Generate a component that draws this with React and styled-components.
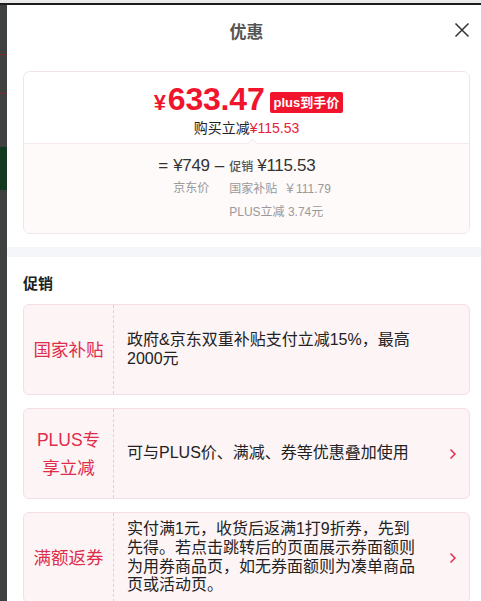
import React from 'react';
import styled, { createGlobalStyle } from 'styled-components';

const GlobalStyle = createGlobalStyle`
  html, body {
    margin: 0;
    padding: 0;
    background: #3f4040;
  }
  body {
    font-family: "Liberation Sans", "Noto Sans CJK SC", sans-serif;
    color: #222;
  }
  * {
    box-sizing: border-box;
  }
`;

const promos = [
  {
    tag: '国家补贴',
    text: '政府&京东双重补贴支付立减15%，最高2000元',
    arrow: false,
  },
  {
    tag: ['PLUS专', '享立减'],
    text: '可与PLUS价、满减、券等优惠叠加使用',
    arrow: true,
  },
  {
    tag: '满额返券',
    text: '实付满1元，收货后返满1打9折券，先到先得。若点击跳转后的页面展示券面额则为用券商品页，如无券面额则为凑单商品页或活动页。',
    arrow: true,
  },
];

const CloseIcon = () => (
  <svg width="16" height="16" viewBox="0 0 16 16">
    <path d="M1.5 1.5 L14.5 14.5 M14.5 1.5 L1.5 14.5" stroke="#333" strokeWidth="1.5" fill="none" />
  </svg>
);

const Chevron = () => (
  <svg width="8" height="12" viewBox="0 0 8 12">
    <path d="M1.5 1.5 L6 6 L1.5 10.5" stroke="#e0304e" strokeWidth="1.5" fill="none" />
  </svg>
);

const App = () => {
  return (
    <>
      <GlobalStyle />
      <Page>
        <TopEdge />
        <Body>
          <Backdrop>
            <Stripe $top={49} $color="#7a2b30" />
            <Stripe $top={38} $color="#7a2b30" />
            <GreenBlock />
          </Backdrop>
          <Sheet>
            <Header>
              <Title>优惠</Title>
              <CloseButton>
                <CloseIcon />
              </CloseButton>
            </Header>

            <Content>
              <PriceCard>
                <PriceTop>
                  <PriceRow>
                    <BigPrice>
                      <Yen>¥</Yen>633.47
                    </BigPrice>
                    <Badge>plus到手价</Badge>
                  </PriceRow>
                  <Saving>
                    购买立减<Red>¥115.53</Red>
                  </Saving>
                  <Notch />
                </PriceTop>
                <PriceBottom>
                  <Formula>
                    <Op>=</Op>
                    <Column>
                      <Amount>¥749</Amount>
                      <Note>京东价</Note>
                    </Column>
                    <Op>–</Op>
                    <Column>
                      <Amount>
                        <Small>促销</Small>¥115.53
                      </Amount>
                      <Note>国家补贴&nbsp;&nbsp;￥111.79</Note>
                      <Note>PLUS立减 3.74元</Note>
                    </Column>
                  </Formula>
                </PriceBottom>
              </PriceCard>
            </Content>

            <Band />

            <Content>
              <SectionTitle>促销</SectionTitle>
              <PromoList>
                {promos.map((p, i) => (
                  <PromoCard key={i}>
                    <PromoTag>
                      <span>
                        {Array.isArray(p.tag)
                          ? p.tag.map((t, j) => <div key={j}>{t}</div>)
                          : p.tag}
                      </span>
                    </PromoTag>
                    <PromoText>{p.text}</PromoText>
                    <PromoArrow>{p.arrow && <Chevron />}</PromoArrow>
                  </PromoCard>
                ))}
              </PromoList>
            </Content>
          </Sheet>
        </Body>
      </Page>
    </>
  );
};

export default App;

const Page = styled.div`
  width: 481px;
  height: 601px;
  overflow: hidden;
  display: flex;
  flex-direction: column;
`;

const TopEdge = styled.div`
  height: 5px;
  flex-shrink: 0;
  background: #e9e9e9;
  border-bottom: 2px solid #1c1c1c;
`;

const Body = styled.div`
  flex: 1;
  display: flex;
  min-height: 0;
`;

const Backdrop = styled.div`
  width: 7px;
  flex-shrink: 0;
  background: #3f4040;
  display: flex;
  flex-direction: column;
`;

const Stripe = styled.div`
  height: 1px;
  flex-shrink: 0;
  margin-top: ${(p) => p.$top}px;
  background: ${(p) => p.$color};
`;

const GreenBlock = styled.div`
  height: 43px;
  flex-shrink: 0;
  margin-top: 53px;
  background: #11391f;
`;

const Sheet = styled.div`
  flex: 1;
  background: #fff;
  overflow: hidden;
`;

const Header = styled.div`
  height: 50px;
  display: flex;
  align-items: center;
  justify-content: center;
  position: relative;
  padding: 0 11px 0 16px;
`;

const Title = styled.div`
  font-size: 17px;
  font-weight: bold;
  color: #555;
`;

const CloseButton = styled.div`
  position: absolute;
  right: 11px;
  top: 17px;
  width: 16px;
  height: 16px;
  display: flex;
`;

const Content = styled.div`
  padding: 0 11px 0 16px;
`;

const PriceCard = styled.div`
  margin-top: 16px;
  border: 1px solid #f1e4e7;
  border-radius: 7px;
  overflow: hidden;
`;

const PriceTop = styled.div`
  position: relative;
  padding: 13px 0 6px;
  display: flex;
  flex-direction: column;
  align-items: center;
  border-bottom: 1px solid #f5e9ec;
`;

const PriceRow = styled.div`
  height: 32px;
  display: flex;
  align-items: center;
  gap: 5px;
  margin-bottom: 2px;
  margin-left: 4px;
`;

const BigPrice = styled.div`
  font-size: 32px;
  font-weight: bold;
  color: #f0152d;
  line-height: 32px;
  letter-spacing: -0.2px;
`;

const Yen = styled.span`
  font-size: 22px;
  margin-right: 2px;
`;

const Badge = styled.div`
  background: #f0152d;
  color: #fff;
  font-size: 13px;
  font-weight: bold;
  line-height: 21px;
  padding: 0 4px;
  border-radius: 2px;
  margin-top: 3px;
`;

const Saving = styled.div`
  font-size: 14px;
  line-height: 18px;
  color: #222;
`;

const Red = styled.span`
  color: #e8203a;
`;

const Notch = styled.div`
  position: absolute;
  left: 225px;
  bottom: -4px;
  width: 7px;
  height: 7px;
  background: #fefafa;
  border-top: 1px solid #f5e9ec;
  border-left: 1px solid #f5e9ec;
  transform: rotate(45deg);
`;

const PriceBottom = styled.div`
  background: #fefafa;
  padding: 11px 0 10px;
  display: flex;
  justify-content: center;
`;

const Formula = styled.div`
  display: flex;
  align-items: flex-start;
  gap: 5px;
  margin-left: -4px;
`;

const Op = styled.div`
  font-size: 17px;
  line-height: 22px;
  color: #333;
`;

const Column = styled.div`
  display: flex;
  flex-direction: column;
`;

const Amount = styled.div`
  font-size: 17px;
  line-height: 22px;
  color: #333;
  font-weight: 500;
  letter-spacing: -0.3px;
`;

const Small = styled.span`
  font-size: 12px;
  margin-right: 4px;
  color: #555;
  letter-spacing: 0;
`;

const Note = styled.div`
  font-size: 12px;
  line-height: 22.5px;
  color: #999;
`;

const Band = styled.div`
  height: 10px;
  margin-top: 13px;
  background: #f5f6fa;
`;

const SectionTitle = styled.div`
  padding-top: 16px;
  font-size: 15px;
  font-weight: bold;
  line-height: 22px;
  color: #222;
`;

const PromoList = styled.div`
  margin-top: 9px;
  display: flex;
  flex-direction: column;
  gap: 13px;
`;

const PromoCard = styled.div`
  min-height: 91px;
  flex-shrink: 0;
  display: flex;
  background: #fdf4f6;
  border: 1px solid #f4dfe4;
  border-radius: 6px;
`;

const PromoTag = styled.div`
  width: 90px;
  flex-shrink: 0;
  display: flex;
  align-items: center;
  justify-content: center;
  text-align: center;
  border-right: 1px dashed #ecc9d1;
  font-size: 17.5px;
  line-height: 28px;
  color: #dd2d4b;
`;

const PromoText = styled.div`
  flex: 1;
  display: flex;
  align-items: center;
  padding: 7px 0 7px 13px;
  font-size: 16px;
  line-height: 18.7px;
  color: #222;
`;

const PromoArrow = styled.div`
  width: 44px;
  flex-shrink: 0;
  display: flex;
  align-items: center;
  justify-content: flex-end;
  padding-right: 12px;
`;
